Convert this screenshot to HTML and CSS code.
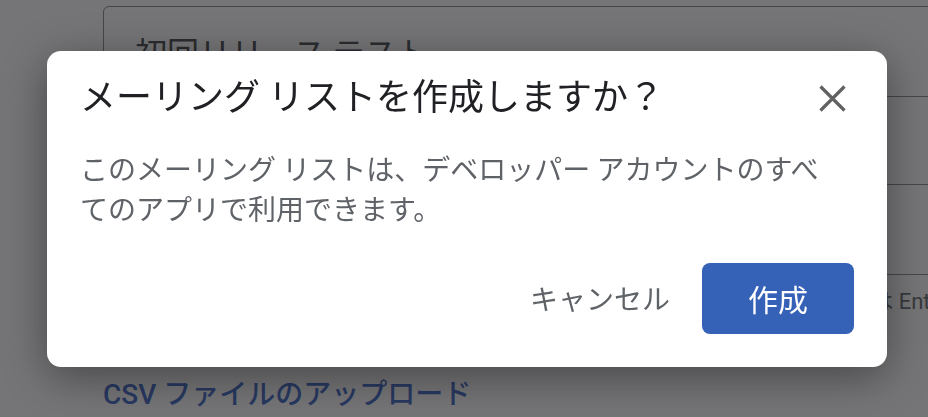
FILE: index.html
```html
<!DOCTYPE html>
<html lang="ja">
<head>
<meta charset="utf-8">
<title>メーリング リストを作成しますか？</title>
<link rel="stylesheet" href="styles.css">
</head>
<body>
<div class="page">
  <div class="field field-name">
    <span class="field-value">初回リリース テスト</span>
  </div>
  <div class="field field-emails"></div>
  <p class="helper">複数のメールアドレスを入力する場合は、カンマで区切ってください。区切りは Enter キーでも入力できます。</p>
  <a class="upload-link" href="#">CSV ファイルのアップロード</a>
</div>

<div class="overlay">
  <div class="dialog" role="dialog" aria-labelledby="dlg-title">
    <div class="dialog-header">
      <h2 class="dialog-title" id="dlg-title">メーリング リストを作成しますか？</h2>
      <button class="close-btn" aria-label="閉じる">
        <svg width="27" height="27" viewBox="0 0 27 27" aria-hidden="true">
          <path d="M1.5 1.5 L25.5 25.5 M25.5 1.5 L1.5 25.5" stroke="#616161" stroke-width="3.2" fill="none"/>
        </svg>
      </button>
    </div>
    <p class="dialog-body">このメーリング リストは、デベロッパー アカウントのすべてのアプリで利用できます。</p>
    <div class="dialog-actions">
      <button class="btn btn-text">キャンセル</button>
      <button class="btn btn-primary">作成</button>
    </div>
  </div>
</div>
</body>
</html>
```

FILE: styles.css
```css
html, body {
  margin: 0;
  padding: 0;
  width: 100%;
  height: 100%;
  overflow: hidden;
  background: #ffffff;
  font-family: "Roboto", "Noto Sans CJK JP", sans-serif;
}

.page {
  padding: 6px 0 0 103px;
  width: 1100px;
  box-sizing: border-box;
}

.field {
  width: 900px;
  height: 91px;
  box-sizing: border-box;
  border: 1.5px solid #80868b;
  border-radius: 6px;
  display: flex;
  align-items: center;
  padding-left: 31px;
}

.field-emails {
  margin-top: 87px;
}

.field-value {
  font-family: "Noto Sans CJK JP", sans-serif;
  font-size: 32px;
  line-height: 40px;
  color: #3c4043;
  padding-bottom: 2px;
}

.helper {
  margin: 12px 0 0 0;
  font-size: 22px;
  line-height: 30px;
  color: #5f6368;
  white-space: nowrap;
}

.upload-link {
  display: block;
  margin-top: 58px;
  font-size: 28px;
  line-height: 40px;
  color: #3560c4;
  text-decoration: none;
  font-weight: 500;
}

.overlay {
  position: fixed;
  inset: 0;
  background: rgba(32, 33, 36, 0.62);
  display: flex;
  align-items: center;
  justify-content: center;
}

.dialog {
  width: 840px;
  box-sizing: border-box;
  margin-left: 6px;
  background: #ffffff;
  border-radius: 14px;
  padding: 21px 33px 33px 33px;
  box-shadow: 0 10px 44px rgba(0, 0, 0, 0.4);
  font-family: "Noto Sans CJK JP", sans-serif;
}

.dialog-header {
  display: flex;
  justify-content: space-between;
  align-items: flex-start;
  height: 44px;
}

.dialog-title {
  margin: 0;
  font-size: 36px;
  line-height: 44px;
  font-weight: 400;
  color: #202124;
}

.close-btn {
  margin-top: 6px;
  width: 44px;
  height: 38px;
  padding: 7px 0 0 0;
  border: none;
  background: transparent;
  display: flex;
  align-items: flex-start;
  justify-content: center;
}

.dialog-body {
  margin: 32px 20px 0 0;
  font-size: 28px;
  line-height: 40px;
  color: #5f6368;
}

.dialog-actions {
  margin-top: 35px;
  display: flex;
  justify-content: flex-end;
  align-items: center;
  gap: 16px;
}

.btn {
  height: 71px;
  border: none;
  border-radius: 8px;
  font-family: "Noto Sans CJK JP", sans-serif;
  background: transparent;
  line-height: 1;
}

.btn-text {
  padding: 0 16px;
  font-size: 28px;
  color: #5f6368;
}

.btn-primary {
  width: 152px;
  font-size: 30px;
  color: #ffffff;
  background: #3561b7;
}
```
